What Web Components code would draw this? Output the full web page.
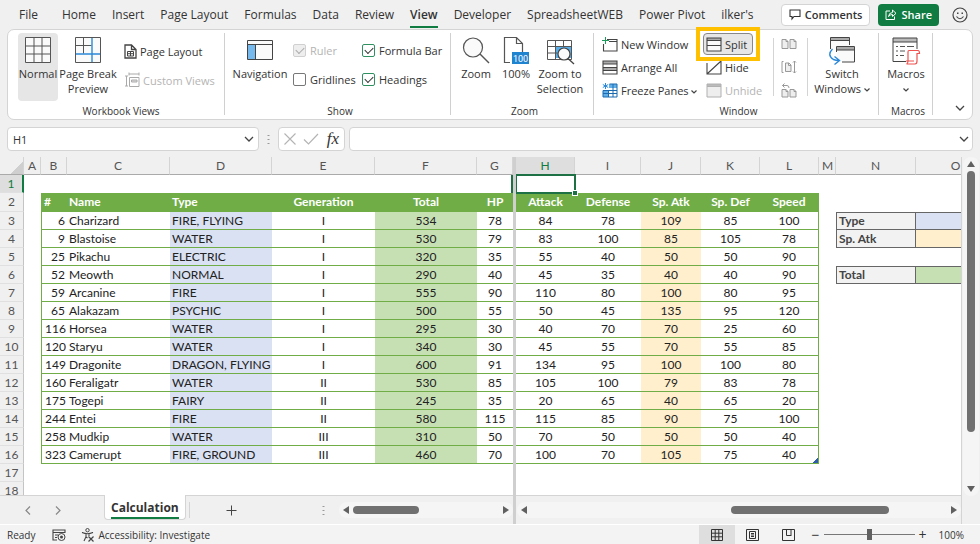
<!DOCTYPE html>
<html lang="en">
<head>
<meta charset="utf-8">
<title>Calculation</title>
<style>
  html, body { height: 100%; }
  body {
    margin: 0;
    overflow: hidden;
    --ui: 'Open Sans', 'Noto Sans', sans-serif;
    --cell: 'Lato', 'Open Sans', sans-serif;
    --ink: #333;
    --green: #107c41;
    --chrome: #f0f0f0;
    --line: #d4d4d4;
    font-family: var(--ui);
    font-size: 11px;
    color: var(--ink);
    background: var(--chrome);
  }
</style>
</head>
<body>
<excel-app></excel-app>

<script>
const ICONS = {
  normal: [26, 26, '<path d="M.5 .5h25v25H.5z" fill="#fafafa"/><path d="M.5.5h25v25H.5zM9 .5v25M17 .5v25M.5 9h25M.5 17h25" stroke="#555"/>'],
  pagebreak: [26, 26, '<path d="M.5.5h25v25H.5z" fill="#fafafa"/><path d="M.5.5h25v25H.5zM8.500 .5v16M.5 8.500h16" stroke="#555"/><path d="M17 1v24M1 17h24" stroke="#2b88d8" stroke-width="1.4"/>'],
  pagelayout: [13, 15, '<path d="M1 1h6.500l4.500 4.500V14H1zM7.500 1v4.500H12" stroke="#444" stroke-width="1.300"/><path d="M3.500 7.500h6v4.500h-6zM6.500 7.500V12M3.500 9.700h6" stroke="#444"/>'],
  custom: [16, 16, '<path d="M1 4h3M2.500 4v10M1 14h3M5 .5v3M5 2h10M15 .5v3M5.500 5.500h9.500v9H5.500z" stroke="#aaa"/><path d="M7.500 8h5.500v2H7.500z" stroke="#aaa" fill="#ddd"/>'],
  navigation: [26, 26, '<path d="M.5 3.500h25v19H.5z" fill="#fafafa"/><path d="M1 8h7v14H1z" fill="#76b9ed"/><path d="M.5 3.500h25v19H.5zM.5 7.500h25M8.500 7.500v15" stroke="#444"/>'],
  zoom: [28, 28, '<circle cx="11" cy="10.500" r="9.500" stroke="#555" stroke-width="1.200" fill="#fafafa"/><path d="M18 17l9 9" stroke="#555" stroke-width="1.400"/>'],
  hundred: [26, 28, '<path d="M7 25.500H1.500V.5h12l6 6V15M13.500.5v6h6" stroke="#555" stroke-width="1.200"/><path d="M9 15h17v12H9z" fill="#2083cf"/><text x="17.500" y="24.500" font-size="9" text-anchor="middle" fill="#fff" font-family="Roboto, sans-serif">100</text>'],
  zoomsel: [28, 26, '<path d="M9 9h17v12H9z" fill="#5aaee8"/><path d="M1.500 3.500h24v19h-24zM9.500 3.500v19M17.500 3.500v6M1.500 9.500h24M1.500 16h10" stroke="#555"/><circle cx="18" cy="17" r="6" fill="#fafafa" stroke="#444" stroke-width="1.200"/><path d="M22 21.500l6 5.500" stroke="#444" stroke-width="1.300"/>'],
  newwin: [16, 15, '<path d="M5 2.500h10v11.500H1.500V7M7 4.500h8" stroke="#444" stroke-width="1.100"/><path d="M3.500 0v7M0 3.500h7" stroke="#1e9b5a"/>'],
  arrange: [16, 15, '<path d="M1 1h14v3H1zM1 8h14v3H1z" fill="#aaa"/><path d="M1 1h14v13H1zM1 4h14M1 7.500h14M1 10.500h14" stroke="#444" stroke-width="1.100"/>'],
  freeze: [16, 15, '<path d="M7 1h8v4H7zM1 7h5v7H1z" fill="#62b0ea"/><path d="M7.500 1h7.500v13H1V7.500h14M6.500 7v7M11 1v13M1 10.500h14" stroke="#1b6ab0"/><path d="M3.500 0v6M.8 1.500l5.400 3M6.200 1.500L.8 4.500" stroke="#2b88d8"/>'],
  split: [16, 15, '<path d="M1 1h14v13H1z" fill="#fafafa"/><path d="M1 1h14v2.500H1z" fill="#aaa"/><path d="M1 1h14v13H1zM1 3.500h14" stroke="#444" stroke-width="1.100"/><path d="M1 8.500h14" stroke="#444"/>'],
  hide: [16, 15, '<path d="M1 3v11h14V1M1.500 13.500L14.500 1.500" stroke="#444" stroke-width="1.100"/>'],
  unhide: [16, 15, '<path d="M1 1h14v13H1z" fill="#eee"/><path d="M1 1h14v2.500H1z" fill="#bbb"/><path d="M1 1h14v13H1zM1 3.500h14" stroke="#b0b0b0"/>'],
  sidebyside: [16, 12, '<path d="M1 1.500h4l2 2v7H1zM9 1.500h4l2 2v7H9zM5 1.500v2h2M13 1.500v2h2" fill="#eee" stroke="#999"/>'],
  sync: [16, 14, '<path d="M4.500 3h3.500l2 2v6.500H4.500z" fill="#eee"/><path d="M1 1.500v11M4.500 3h3.500l2 2v6.500H4.500zM7.500 3v2.500H10M2.500 1.500H1M2.500 12.500H1M13.500 1v12M12 2.500L13.500 1 15 2.500M12 11.500l1.500 1.500 1.500-1.500" stroke="#999"/>'],
  reset: [16, 15, '<path d="M1 6.500h4l2 2v5.500H1zM9 6.500h4l2 2v5.500H9zM5 6.500v2h2M13 6.500v2h2" fill="#eee" stroke="#999"/><path d="M1.500 2.500h4.500q2 0 2 2.500M3.500.5l-2 2 2 2" stroke="#999"/>'],
  switchwin: [28, 26, '<path d="M2.500.5h19v5h-19z" fill="#aaa"/><path d="M3 4h18v8H3z" fill="#fafafa"/><path d="M2.500 12V.5h19V8M2.500 3.500h19" stroke="#444"/><path d="M8.500 9.500h18v15.500h-18z" fill="#fafafa"/><path d="M9 10h17v3H9z" fill="#aaa"/><path d="M8.500 15V9.500h18v15.500H14M8.500 13h18" stroke="#444"/><path d="M4.500 12q-6 6 1 10.500 2.500 1 5 1M6.500 19.500l5 4-5 4" stroke="#2b88d8" stroke-width="1.400"/>'],
  macros: [28, 27, '<path d="M1 1h24v4H1z" fill="#bbb"/><path d="M14 24.500H1V1h24v11M1 5h24" stroke="#444"/><path d="M4 9.500h2M8 9.500h5M15 9.500h7M4 14h2M8 14h5M4 18.500h2M8 18.500h4" stroke="#555"/><path d="M17 13.500h9q1.500 0 1.500 3h-2.500v7.500q0 3-2 3h-8.500q1.500-.5 1.500-3V15q0-1.500 1-1.500zM14 24h8" stroke="#f0524f" stroke-width="1.200" fill="#fff"/>'],
  chevron: [6, 4, '<path d="M.5.5L3 3 5.500.5" stroke="#444" stroke-width="1.200"/>'],
  bigchevron: [10, 6, '<path d="M1 1l4 4 4-4" stroke="#444" stroke-width="1.300"/>'],
  left: [6, 9, '<path d="M5 .5l-4 4 4 4" stroke="#888" stroke-width="1.200"/>'],
  right: [6, 9, '<path d="M1 .5l4 4-4 4" stroke="#888" stroke-width="1.200"/>'],
  plus: [11, 11, '<path d="M5.500 .5v10M.5 5.500h10" stroke="#444"/>'],
  dots: [3, 11, '<path d="M.5 1h2v1h-2zM.5 5h2v1h-2zM.5 9h2v1h-2z" fill="#999"/>'],
  comment: [12, 11, '<path d="M1 1h10v6.500H5L3 10V7.500H1z" stroke="#333" stroke-width="1.100"/>'],
  share: [12, 11, '<path d="M5 2H1v8.500h8.500V7.500M3.500 7.500q.5-4 4-4V1L11 4.300 7.500 7.500V5.500q-2.500 0-4 2z" stroke="#fff"/>'],
  smile: [16, 16, '<circle cx="8" cy="8" r="7" stroke="#444" stroke-width="1.200"/><path d="M4.500 9.500q3.500 4.500 7 0" stroke="#444" stroke-width="1.200"/><path d="M5 5.500h1.500v1.500H5zM9.500 5.500H11v1.500H9.500z" fill="#444"/>'],
  cancel: [12, 12, '<path d="M.5.5l11 11M11.500.5l-11 11" stroke="#b4b4b4" stroke-width="1.100"/>'],
  accept: [16, 12, '<path d="M1 6.500L5.500 11 15 1" stroke="#b4b4b4" stroke-width="1.200"/>'],
  record: [14, 12, '<path d="M5 11H1V1h12v3M1 3.500h12M3 6h3M3 8.500h2" stroke="#444" stroke-width="1.100"/><circle cx="9.500" cy="8" r="3.500" stroke="#444" fill="#f3f3f3"/><circle cx="9.500" cy="8" r="1.500" fill="#444"/>'],
  access: [14, 14, '<circle cx="6.500" cy="2.200" r="1.700" stroke="#444"/><path d="M1 4.500l4 1.200v3L3 13M12 4.500L8 5.700v2.300M1 4.500q3 1.200 5.500 1.200T12 4.500M5 9l1.500 1" stroke="#444" stroke-width="1.100"/><path d="M7.500 8.500l5 5M12.500 8.500l-5 5" stroke="#444" stroke-width="1.200"/>'],
  gridview: [12, 12, '<path d="M.5.5h11v11H.5zM4.200.5v11M7.800.5v11M.5 4.200h11M.5 7.800h11" stroke="#333"/>'],
  pageview: [13, 12, '<path d="M.5.5h12v11H.5zM3.500 2.500h6v7h-6zM5 4.500h3M5 6h3M5 7.500h3" stroke="#333"/>'],
  breakview: [13, 12, '<path d="M.5.5h12v11H.5zM4.500.5v6h4.500M9 .5v6.500" stroke="#333"/>'],
  arrowleft: [6, 8, '<path d="M6 0v8L0 4z" fill="#606060"/>'],
  arrowright: [6, 8, '<path d="M0 0v8l6-4z" fill="#606060"/>'],
  arrowup: [8, 6, '<path d="M0 6h8L4 0z" fill="#606060"/>'],
  arrowdown: [8, 6, '<path d="M0 0h8L4 6z" fill="#606060"/>']
};

// icon markup: plain svg, reused inside every shadow root
const icon = (name) => {
  const [w, h, body] = ICONS[name];
  return `<svg width="${w}" height="${h}" viewBox="0 0 ${w} ${h}" fill="none" aria-hidden="true">${body}</svg>`;
};

const BASE = /* css */`
  * { box-sizing: border-box; }
  button, input { font: inherit; color: inherit; margin: 0; }
  button { background: none; border: 0; padding: 0; }
  svg { display: block; flex: none; overflow: visible; }
`;

class BaseElement extends HTMLElement {
  constructor() {
    super();
    this.attachShadow({ mode: 'open' });
  }

  connectedCallback() {
    this.shadowRoot.innerHTML = `<style>${BASE}${this.styles()}</style>${this.markup()}`;
  }
}

class MenuTabs extends BaseElement {
  styles() {
    return /* css */`
      :host { display: flex; align-items: center; height: 29px; padding: 0 12px 0 19px; font-size: 12px; flex: none; }
      nav { display: flex; gap: 16px; flex: 1; padding-top: 2px; }
      a { color: inherit; text-decoration: none; line-height: 22px; white-space: nowrap; border-bottom: 2px solid transparent; }
      a:first-child { padding-right: 8px; }
      a.active { font-weight: 600; border-color: var(--green); }
      .actions { display: flex; align-items: center; gap: 8px; font-weight: 600; }
      button { display: flex; align-items: center; gap: 4px; height: 22px; padding: 0 7px; border-radius: 4px; font-size: 11px; }
      .comments { background: #fff; border: 1px solid var(--line); }
      .share { background: var(--green); color: #fff; }
      .smile { padding: 0; margin-left: 5px; }
    `;
  }

  markup() {
    const tabs = ['File', 'Home', 'Insert', 'Page Layout', 'Formulas', 'Data', 'Review', 'View', 'Developer', 'SpreadsheetWEB', 'Power Pivot', "ilker's"];
    return `
      <nav>${tabs.map(t => `<a href="#"${t === 'View' ? ' class="active"' : ''}>${t}</a>`).join('')}</nav>
      <div class="actions">
        <button class="comments">${icon('comment')}Comments</button>
        <button class="share">${icon('share')}Share</button>
        <button class="smile" aria-label="Feedback">${icon('smile')}</button>
      </div>`;
  }
}

class RibbonGroup extends BaseElement {
  styles() {
    return /* css */`
      :host { display: flex; flex-direction: column; position: relative; padding-top: 3px; border-right: 1px solid transparent;
        border-image: linear-gradient(transparent 4%, #d0d0d0 4%, #d0d0d0 95%, transparent 95%) 1; }
      .items { display: flex; height: 70px; align-items: flex-start; }
      .label { text-align: center; line-height: 16px; font-size: 10px; }
    `;
  }

  markup() {
    return `<div class="items"><slot></slot></div><div class="label">${this.getAttribute('label')}</div>`;
  }
}

// Large button: icon on top, text under it. With "small": icon and text in one row.
class RibbonButton extends BaseElement {
  styles() {
    return /* css */`
      :host { display: block; position: relative; flex: none; }
      :host([disabled]) { color: #b4b4b4; }
      button { display: flex; flex-direction: column; align-items: center; gap: 2px; width: 100%; height: 68px; padding-top: 4px; border-radius: 4px; line-height: 15px; white-space: nowrap; }
      .icon { display: flex; height: 27px; }
      .text { text-align: center; }
      .text svg { display: inline-block; vertical-align: middle; }
      :host([active]) button { background: #e6e6e6; }
      :host([small]) button { flex-direction: row; gap: 3px; height: 22px; padding: 0 3px; }
      :host([small]) .icon { height: auto; }
      :host([small][active]) button { border: 1px solid #888; padding: 0 2px; }
      :host([highlight])::after { content: ''; position: absolute; inset: -6px -7px; border: 4px solid #ffc000; pointer-events: none; }
    `;
  }

  markup() {
    const off = this.hasAttribute('disabled') ? ' disabled' : '';
    const arrow = this.hasAttribute('arrow') ? ' ' + icon('chevron') : '';
    return `<button${off} aria-label="${this.getAttribute('aria') ?? ''}"><span class="icon">${icon(this.getAttribute('icon'))}</span><span class="text"><slot></slot>${arrow}</span></button>`
      .replace(' aria-label=""', '');
  }
}

class RibbonCheck extends BaseElement {
  styles() {
    return /* css */`
      :host { display: block; }
      label { display: flex; align-items: center; gap: 4px; height: 15px; white-space: nowrap; }
      input { appearance: none; width: 13px; height: 13px; border: 1px solid #777; border-radius: 2px; background: #fff; display: grid; place-items: center; }
      input:checked { border-color: #2f9160; }
      input:checked::before { content: ''; width: 7px; height: 4px; border: solid #333; border-width: 0 0 1px 1px; rotate: -45deg; translate: 0 -1px; }
      input:disabled { border-color: #d0d0d0; background: #eee; }
      input:disabled::before { border-color: #aaa; }
      input:disabled + span { color: #b4b4b4; }
    `;
  }

  markup() {
    const flags = ['checked', 'disabled'].filter(f => this.hasAttribute(f)).join(' ');
    return `<label><input type="checkbox" ${flags}><span><slot></slot></span></label>`;
  }
}

class RibbonBar extends BaseElement {
  styles() {
    return /* css */`
      :host { display: grid; grid-template-columns: 217px 226px 143px 285px 54px 1fr; height: 91px; margin: 0 7px; background: #fff; border: 1px solid var(--line); border-radius: 7px; flex: none; }
      ribbon-group { padding-left: 5px; }
      ribbon-group.views { padding-left: 10px; }
      .w40 { width: 40px; } .w44 { width: 44px; } .w48 { width: 48px; } .w60 { width: 60px; }
      .stack { display: flex; flex-direction: column; }
      .pair { gap: 7px; padding: 7px 0 0 3px; }
      .checks { display: grid; grid-template-columns: 69px auto; row-gap: 14px; padding: 10px 0 0 3px; }
      .trio { gap: 1px; }
      .bar { width: 1px; height: 58px; background: var(--line); margin-top: 5px; }
      .more { display: flex; align-items: flex-end; justify-content: flex-end; padding: 0 7px 8px; }
    `;
  }

  markup() {
    return `
      <ribbon-group label="Workbook Views" class="views">
        <ribbon-button icon="normal" class="w40" active>Normal</ribbon-button>
        <ribbon-button icon="pagebreak" class="w60">Page Break<br>Preview</ribbon-button>
        <div class="stack pair">
          <ribbon-button small icon="pagelayout">Page Layout</ribbon-button>
          <ribbon-button small icon="custom" disabled>Custom Views</ribbon-button>
        </div>
      </ribbon-group>
      <ribbon-group label="Show">
        <ribbon-button icon="navigation" class="w60">Navigation</ribbon-button>
        <div class="checks">
          <ribbon-check checked disabled>Ruler</ribbon-check>
          <ribbon-check checked>Formula Bar</ribbon-check>
          <ribbon-check>Gridlines</ribbon-check>
          <ribbon-check checked>Headings</ribbon-check>
        </div>
      </ribbon-group>
      <ribbon-group label="Zoom">
        <ribbon-button icon="zoom" class="w40">Zoom</ribbon-button>
        <ribbon-button icon="hundred" class="w40">100%</ribbon-button>
        <ribbon-button icon="zoomsel" class="w48">Zoom to<br>Selection</ribbon-button>
      </ribbon-group>
      <ribbon-group label="Window">
        <div class="stack trio" style="width: 104px">
          <ribbon-button small icon="newwin">New Window</ribbon-button>
          <ribbon-button small icon="arrange">Arrange All</ribbon-button>
          <ribbon-button small icon="freeze" arrow>Freeze Panes</ribbon-button>
        </div>
        <div class="stack trio" style="width: 70px; align-items: flex-start">
          <ribbon-button small icon="split" active highlight>Split&nbsp;</ribbon-button>
          <ribbon-button small icon="hide">Hide</ribbon-button>
          <ribbon-button small icon="unhide" disabled>Unhide</ribbon-button>
        </div>
        <div class="bar"></div>
        <div class="stack trio" style="padding: 0 4px">
          <ribbon-button small icon="sidebyside" disabled aria="View Side by Side"></ribbon-button>
          <ribbon-button small icon="sync" disabled aria="Synchronous Scrolling"></ribbon-button>
          <ribbon-button small icon="reset" disabled aria="Reset Window Position"></ribbon-button>
        </div>
        <div class="bar"></div>
        <ribbon-button icon="switchwin" arrow style="width: 68px">Switch<br>Windows</ribbon-button>
      </ribbon-group>
      <ribbon-group label="Macros">
        <ribbon-button icon="macros" class="w44" arrow>Macros<br></ribbon-button>
      </ribbon-group>
      <div class="more">${icon('bigchevron')}</div>`;
  }
}

class FormulaBar extends BaseElement {
  styles() {
    return /* css */`
      :host { display: flex; align-items: center; height: 24px; margin: 7px 7px 6px; gap: 4px; flex: none; }
      .box { display: flex; align-items: center; height: 24px; background: #fff; border: 1px solid var(--line); border-radius: 4px; }
      input { border: 0; outline: 0; background: none; padding: 0 5px; min-width: 0; flex: 1; }
      .name { width: 252px; padding-right: 4px; }
      .dots { padding: 0 4px; }
      .tools { width: 67px; justify-content: space-between; padding: 0 5px; }
      .fx { font: italic 17px 'Liberation Serif', serif; }
      .formula { flex: 1; padding-right: 3px; }
    `;
  }

  markup() {
    return `
      <div class="box name"><input value="H1" aria-label="Name Box"><button aria-label="Open names">${icon('bigchevron')}</button></div>
      <span class="dots">${icon('dots')}</span>
      <div class="box tools">
        <button aria-label="Cancel">${icon('cancel')}</button>
        <button aria-label="Enter">${icon('accept')}</button>
        <button class="fx" aria-label="Insert Function">fx</button>
      </div>
      <div class="box formula"><input aria-label="Formula"><button aria-label="Expand">${icon('bigchevron')}</button></div>`;
  }
}

const HEADER = { B: '#', C: 'Name', D: 'Type', E: 'Generation', F: 'Total', G: 'HP', H: 'Attack', I: 'Defense', J: 'Sp. Atk', K: 'Sp. Def', L: 'Speed' };
const DATA = [
  [6, 'Charizard', 'FIRE, FLYING', 'I', 534, 78, 84, 78, 109, 85, 100],
  [9, 'Blastoise', 'WATER', 'I', 530, 79, 83, 100, 85, 105, 78],
  [25, 'Pikachu', 'ELECTRIC', 'I', 320, 35, 55, 40, 50, 50, 90],
  [52, 'Meowth', 'NORMAL', 'I', 290, 40, 45, 35, 40, 40, 90],
  [59, 'Arcanine', 'FIRE', 'I', 555, 90, 110, 80, 100, 80, 95],
  [65, 'Alakazam', 'PSYCHIC', 'I', 500, 55, 50, 45, 135, 95, 120],
  [116, 'Horsea', 'WATER', 'I', 295, 30, 40, 70, 70, 25, 60],
  [120, 'Staryu', 'WATER', 'I', 340, 30, 45, 55, 70, 55, 85],
  [149, 'Dragonite', 'DRAGON, FLYING', 'I', 600, 91, 134, 95, 100, 100, 80],
  [160, 'Feraligatr', 'WATER', 'II', 530, 85, 105, 100, 79, 83, 78],
  [175, 'Togepi', 'FAIRY', 'II', 245, 35, 20, 65, 40, 65, 20],
  [244, 'Entei', 'FIRE', 'II', 580, 115, 115, 85, 90, 75, 100],
  [258, 'Mudkip', 'WATER', 'III', 310, 50, 70, 50, 50, 50, 40],
  [323, 'Camerupt', 'FIRE, GROUND', 'III', 460, 70, 100, 70, 105, 75, 40]
];
const KEYS = Object.keys(HEADER);
const SIDE = { 3: 'Type', 4: 'Sp. Atk', 6: 'Total' };

class SheetGrid extends BaseElement {
  styles() {
    return /* css */`
      :host { display: block; flex: 1; min-height: 0; overflow: hidden; background: #fff; border-bottom: 1px solid var(--line); font-family: var(--cell); font-size: 12px; color: #222; }
      table { border-collapse: separate; border-spacing: 0; table-layout: fixed; width: 1px; min-width: 100%; }
      td, th { height: 18px; padding: 0 3px; line-height: 14px; overflow: hidden; white-space: nowrap; text-align: center; font-weight: 400; }
      tr.head td { height: 19px; }
      thead th { background: var(--chrome); color: #555; border-bottom: 1px solid #aaa; border-right: 1px solid var(--line); }
      tbody th { background: var(--chrome); color: #555; border-right: 1px solid #c4c4c4; border-bottom: 1px solid #e0e0e0; padding: 0; }
      thead th.sel { background: #dedede; color: var(--green); border-bottom-color: var(--green); }
      tbody th.sel { background: #dedede; color: var(--green); border-right: 2px solid var(--green); }
      th.corner { background: linear-gradient(135deg, transparent 70%, #cfcfcf 70%) var(--chrome); }
      .t { border-bottom: 1px solid #70ad47; }
      .B { text-align: right; }
      .t.B { border-left: 1px solid #70ad47; padding-right: 2px; }
      .t.C, .t.D { text-align: left; padding: 0 2px; }
      .t.L { border-right: 1px solid #70ad47; }
      .t.D { background: #d9e1f2; }
      .t.F { background: #c6e0b4; }
      .t.J { background: #ffefcc; }
      .head .t { background: #70ad47; color: #fff; font-weight: 700; }
      .head .t.B { text-align: left; padding-left: 2px; }
      .side.N { background: #f2f2f2; border: 1px solid #666; text-align: left; font-weight: 700; color: #444; padding: 0 2px; }
      .side.O { border: solid #666; border-width: 1px 0; }
      .r4.side { border-top: 0; }
      .r3.O { background: #d9e1f2; }
      .r4.O { background: #ffefcc; }
      .r6.O { background: #c6e0b4; }
      .cursor { position: relative; overflow: visible; }
      .cursor::before { content: ''; position: absolute; inset: -1px -1px -1px 0; border: 2px solid #1e7145; border-left-width: 1px; z-index: 1; }
      .cursor::after { content: ''; position: absolute; right: -2px; bottom: -2px; width: 4px; height: 4px; background: #1e7145; outline: 1px solid #fff; z-index: 2; }
      .r1.G { border-right: 2px solid #1e7145; }
      .r16.L { background: linear-gradient(135deg, transparent 50%, #2f5da8 50%) right bottom / 5px 5px no-repeat; }
    `;
  }

  cell(row, col) {
    let cls = `r${row} ${col}`;
    let text = '';
    const i = KEYS.indexOf(col);
    if (i >= 0 && row >= 2 && row <= 16) {
      cls += ' t';
      text = row === 2 ? HEADER[col] : DATA[row - 3][i];
    } else if (SIDE[row] && (col === 'N' || col === 'O')) {
      cls += ' side';
      if (col === 'N') text = SIDE[row];
    } else if (row === 1 && col === 'H') {
      cls += ' cursor';
    }
    return `<td class="${cls}">${text}</td>`;
  }

  markup() {
    const cols = this.getAttribute('cols').split(' ').map(c => c.split(':'));
    const heads = this.hasAttribute('heads');
    const rows = Array.from({ length: 18 }, (_, i) => i + 1);
    return `
      <table>
        <colgroup>${heads ? '<col style="width:24px">' : ''}${cols.map(c => `<col style="width:${c[1]}px">`).join('')}</colgroup>
        <thead><tr>${heads ? '<th class="corner"></th>' : ''}${cols.map(c => `<th${c[0] === 'H' ? ' class="sel"' : ''}>${c[0]}</th>`).join('')}</tr></thead>
        <tbody>${rows.map(r => `<tr${r === 2 ? ' class="head"' : ''}>${heads ? `<th${r === 1 ? ' class="sel"' : ''}>${r}</th>` : ''}${cols.map(c => this.cell(r, c[0])).join('')}</tr>`).join('')}</tbody>
      </table>`;
  }
}

// start / size: place and length of the thumb, in percent of the track
class ScrollBar extends BaseElement {
  styles() {
    return /* css */`
      :host { display: flex; align-items: center; gap: 4px; padding: 0 4px; height: 16px; border-radius: 8px; background: #f5f5f5; }
      :host([vertical]) { flex-direction: column; width: 16px; height: auto; padding: 4px 0; }
      .track { flex: 1; display: flex; align-self: stretch; align-items: center; }
      .thumb { height: 8px; border-radius: 4px; background: #707070; margin-left: ${this.getAttribute('start')}%; width: ${this.getAttribute('size')}%; }
      :host([vertical]) .track { align-items: flex-start; justify-content: center; }
      :host([vertical]) .thumb { width: 8px; height: ${this.getAttribute('size')}%; margin: 0; }
    `;
  }

  markup() {
    const v = this.hasAttribute('vertical');
    return `
      <button aria-label="Scroll back">${icon(v ? 'arrowup' : 'arrowleft')}</button>
      <div class="track"><div class="thumb"></div></div>
      <button aria-label="Scroll on">${icon(v ? 'arrowdown' : 'arrowright')}</button>`;
  }
}

class SheetTabs extends BaseElement {
  styles() {
    return /* css */`
      :host { display: flex; align-items: center; height: 28px; flex: none; }
      .nav { display: flex; gap: 24px; padding: 0 43px 0 25px; }
      .tab { align-self: flex-start; height: 25px; margin-top: -1px; padding: 3px 6px 0; background: #fff; border: 1px solid var(--line); border-top: 0; border-radius: 0 0 4px 4px; font-size: 12px; font-weight: 700; }
      .tab span { display: block; line-height: 18px; border-bottom: 2px solid var(--green); }
      .sep { width: 1px; height: 16px; background: var(--line); margin-left: 3px; }
      .add { margin: 0 auto 0 36px; }
      scroll-bar { width: 174px; margin-left: 14px; }
    `;
  }

  markup() {
    return `
      <div class="nav"><button aria-label="Previous sheet">${icon('left')}</button><button aria-label="Next sheet">${icon('right')}</button></div>
      <button class="tab"><span>Calculation</span></button>
      <div class="sep"></div>
      <button class="add" aria-label="New sheet">${icon('plus')}</button>
      ${icon('dots')}
      <scroll-bar start="0" size="45"></scroll-bar>`;
  }
}

class WorkbookView extends BaseElement {
  styles() {
    return /* css */`
      :host { display: flex; flex: 1; min-height: 0; }
      .pane { display: flex; flex-direction: column; min-width: 0; }
      .left { width: 513px; flex: none; }
      .right { flex: 1; }
      .split { width: 3px; background: #cfcfcf; flex: none; }
      .foot { height: 28px; padding: 6px 0 0 1px; flex: none; }
      .side { width: 19px; display: flex; justify-content: center; padding-bottom: 28px; border-left: 1px solid var(--line); }
    `;
  }

  markup() {
    return `
      <div class="pane left">
        <sheet-grid heads cols="A:17 B:26 C:103 D:102 E:103 F:102 G:36"></sheet-grid>
        <sheet-tabs></sheet-tabs>
      </div>
      <div class="split"></div>
      <div class="pane right">
        <sheet-grid cols="H:59 I:66 J:60 K:59 L:59 M:17 N:80 O:80"></sheet-grid>
        <div class="foot"><scroll-bar start="48" size="38"></scroll-bar></div>
      </div>
      <div class="side"><scroll-bar vertical size="84"></scroll-bar></div>`;
  }
}

class StatusBar extends BaseElement {
  styles() {
    return /* css */`
      :host { display: flex; align-items: center; height: 20px; padding: 0 16px 0 7px; background: #f3f3f3; border-top: 1px solid #fff; font-size: 10px; flex: none; }
      .ready { margin-right: 17px; }
      .access { display: flex; align-items: center; gap: 3px; margin-left: 15px; }
      .views { display: flex; margin-left: auto; }
      .views button { width: 36px; height: 20px; display: grid; place-items: center; }
      .views .on { background: #dedede; }
      .zoom { display: flex; align-items: center; gap: 4px; padding-left: 5px; }
      .sign { width: 8px; text-align: center; font-size: 14px; line-height: 16px; }
      input { appearance: none; width: 91px; height: 12px; background: linear-gradient(#777, #777) center / 100% 1px no-repeat; }
      input::-webkit-slider-thumb { appearance: none; width: 5px; height: 11px; background: #606060; }
      output { margin-left: 8px; }
    `;
  }

  markup() {
    return `
      <span class="ready">Ready</span>
      <button aria-label="Record macro">${icon('record')}</button>
      <button class="access">${icon('access')}Accessibility: Investigate</button>
      <div class="views">
        <button class="on" aria-label="Normal view">${icon('gridview')}</button>
        <button aria-label="Page layout view">${icon('pageview')}</button>
        <button aria-label="Page break view">${icon('breakview')}</button>
      </div>
      <div class="zoom">
        <button class="sign" aria-label="Zoom out">−</button>
        <input type="range" min="0" max="100" value="50" aria-label="Zoom">
        <button class="sign" aria-label="Zoom in">+</button>
        <output>100%</output>
      </div>`;
  }
}

class ExcelApp extends BaseElement {
  styles() {
    return /* css */`:host { display: flex; flex-direction: column; height: 100vh; }`;
  }

  markup() {
    return `
      <menu-tabs></menu-tabs>
      <ribbon-bar></ribbon-bar>
      <formula-bar></formula-bar>
      <workbook-view></workbook-view>
      <status-bar></status-bar>`;
  }
}

customElements.define('menu-tabs', MenuTabs);
customElements.define('ribbon-group', RibbonGroup);
customElements.define('ribbon-button', RibbonButton);
customElements.define('ribbon-check', RibbonCheck);
customElements.define('ribbon-bar', RibbonBar);
customElements.define('formula-bar', FormulaBar);
customElements.define('sheet-grid', SheetGrid);
customElements.define('scroll-bar', ScrollBar);
customElements.define('sheet-tabs', SheetTabs);
customElements.define('workbook-view', WorkbookView);
customElements.define('status-bar', StatusBar);
customElements.define('excel-app', ExcelApp);
</script>
</body>
</html>
